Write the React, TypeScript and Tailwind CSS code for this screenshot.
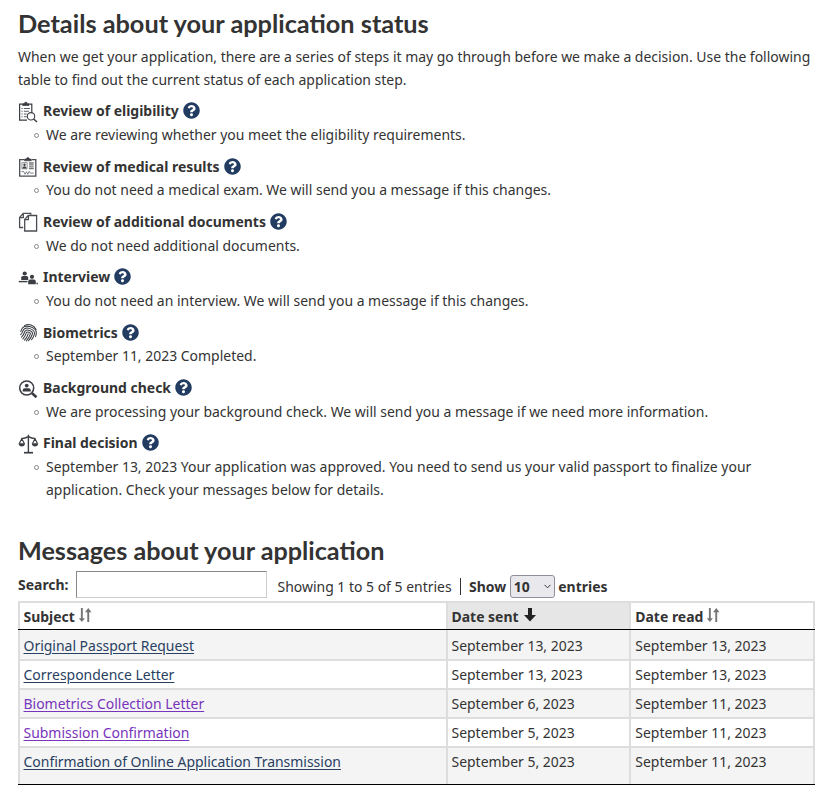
import React from 'react';
import { FaQuestionCircle } from 'react-icons/fa';

const S = '#3a3d42';

const Eligibility = () => (
  <svg width="20" height="22" viewBox="0 0 20 22" fill="none" stroke={S} strokeWidth="1.2">
    <path d="M9 19.200H1.600V3.200h3M11.200 3.200h2.600v8.200" />
    <path d="M4.600 4.400V2.700h1.700a1.500 1.500 0 0 1 3 0H11v1.700z" fill={S} strokeWidth=".8" />
    <path d="M3.400 7.500h1.200M5.900 7.500h6M3.400 10.200h1.200M5.900 10.200h5M3.400 13h1.200M5.900 13h2.800M3.400 15.800h1.200M5.900 15.800h2.800" strokeWidth="1.100" stroke="#5c5f64" />
    <circle cx="13" cy="15.300" r="3.700" strokeWidth="1.100" />
    <path d="M15.700 18l3.300 3" strokeWidth="1.500" />
  </svg>
);

const Medical = () => (
  <svg width="20" height="20" viewBox="0 0 20 20" fill="none" stroke={S} strokeWidth="1.3">
    <path d="M6 2.600H1.700v16.600h16.100V2.600H14" stroke="#4a4d52" />
    <path d="M6.500 3.800V2.100h1.900a1.500 1.500 0 0 1 3 0h1.900v1.700z" fill={S} strokeWidth=".6" />
    <path d="M3.900 5.600h5.200v6.200H3.900z" strokeWidth=".8" stroke="#777" />
    <circle cx="6.500" cy="7.700" r="1.200" fill={S} stroke="none" />
    <path d="M4.500 11.500c0-3 4-3 4 0z" fill={S} stroke="none" />
    <path d="M11 6h4.700M11 7.900h4.700M11 9.800h4.700M11 11.700h4.700" stroke="#777" />
    <path d="M3.500 14.500h2.200l1.300 2.800 1.500-2.600 1.400 2.600 1.300-3 1.100 1.800h3.400" strokeWidth=".8" stroke="#66696e" />
  </svg>
);

const Documents = () => (
  <svg width="20" height="20" viewBox="0 0 20 20" fill="none" strokeWidth="1.3">
    <path d="M5.200 15.500H1.600V5.500L5.200 1.400h7.600v1.400M1.600 5.700h3.700V1.400" stroke="#4a4d52" />
    <path d="M6.700 7.400l3.600-3.900h8.300v15.500H6.700zM6.700 7.600h3.700V3.500" stroke="#4a4d52" />
  </svg>
);

const Interview = () => (
  <svg width="20" height="20" viewBox="0 0 20 20" fill={S}>
    <circle cx="6.700" cy="5.500" r="2.100" />
    <path d="M3.200 12V9.600Q3.200 8 4.900 8h3.600q1.700 0 1.700 1.600V12z" />
    <path d="M.8 12.900h8.700v1.400H.8z" />
    <circle cx="14" cy="8.800" r="2.100" />
    <path d="M10.200 16.200v-2.700q0-2 1.900-2h3.800q1.900 0 1.900 2v2.700zM18.500 14.800h1.400v1.400h-1.400z" />
  </svg>
);

const Fingerprint = () => (
  <svg width="20" height="20" viewBox="0 0 20 20" fill="none" stroke={S} strokeWidth="1.050" strokeLinecap="round">
    <g transform="rotate(18 10.500 10)">
      <path d="M4.500 4.200Q7 1.600 10.500 1.600t6.200 2.800" />
      <path d="M2.700 11V10q0-6.500 7.800-6.500T18.300 10v1.200" />
      <path d="M3.600 14q.9-1.500.9-4 0-4.600 6-4.600t6 4.600q0 3-1 5.500" />
      <path d="M5.200 16q1.300-2.300 1.300-6 0-2.700 4-2.700t4 2.700q0 4-1.500 7.300" />
      <path d="M7 17.300Q8.400 14 8.400 10.300q0-1.200 2.100-1.200t2.100 1.200q0 4.200-1.700 7.800" />
      <path d="M10.500 10.900q0 3.800-1.600 7.200" />
    </g>
  </svg>
);

const Background = () => (
  <svg width="20" height="20" viewBox="0 0 20 20" fill="none" stroke={S}>
    <circle cx="8.700" cy="9" r="7" strokeWidth="1.500" />
    <path d="M13.800 14l4.700 4.200" strokeWidth="2.600" />
    <circle cx="8.700" cy="6.600" r="1.900" fill={S} stroke="none" />
    <path d="M4.700 12.400v-1.200q0-2 2-2h4q2 0 2 2v1.200z" fill={S} stroke="none" />
  </svg>
);

const Scales = () => (
  <svg width="21" height="20" viewBox="0 0 21 20" fill="none" stroke={S} strokeWidth="1.4">
    <path d="M10.400.8v17.500M3.500 4.600q3.700-.2 6.900-2 3.200 1.800 6.900 2" />
    <path d="M6 18.700h9" strokeWidth="1.700" />
    <path d="M1.300 9.500L3.800 4.800l2.500 4.700M14.500 9.500L17 4.800l2.500 4.700" strokeWidth="1.200" />
    <path d="M.5 9.300h6.600q-.5 3.200-3.300 3.200T.5 9.300zM13.700 9.300h6.600q-.5 3.200-3.300 3.200t-3.300-3.200z" fill={S} stroke="none" />
  </svg>
);

const SortBoth = () => (
  <svg width="14" height="15" viewBox="0 0 14 15" fill="#757575" className="mb-[2px] shrink-0">
    <path d="M2.900 0h1.900v10.200h2.100L3.850 14 .800 10.200h2.100z" />
    <path d="M9.300 14h1.900V4.200h2.300L10.250 0 7 4.200h2.300z" />
  </svg>
);

const SortDown = () => (
  <svg width="12" height="14" viewBox="0 0 12 14" fill="#222" className="mb-[2px] shrink-0">
    <path d="M4 0h4v7h4l-6 6.500L0 7h4z" />
  </svg>
);

const steps = [
  { icon: Eligibility, title: 'Review of eligibility', text: 'We are reviewing whether you meet the eligibility requirements.' },
  { icon: Medical, title: 'Review of medical results', text: 'You do not need a medical exam. We will send you a message if this changes.' },
  { icon: Documents, title: 'Review of additional documents', text: 'We do not need additional documents.' },
  { icon: Interview, title: 'Interview', text: 'You do not need an interview. We will send you a message if this changes.' },
  { icon: Fingerprint, title: 'Biometrics', text: 'September 11, 2023 Completed.' },
  { icon: Background, title: 'Background check', text: 'We are processing your background check. We will send you a message if we need more information.' },
  { icon: Scales, title: 'Final decision', text: 'September 13, 2023 Your application was approved. You need to send us your valid passport to finalize your application. Check your messages below for details.' },
];

const messages = [
  { subject: 'Original Passport Request', sent: 'September 13, 2023', read: 'September 13, 2023', visited: false },
  { subject: 'Correspondence Letter', sent: 'September 13, 2023', read: 'September 13, 2023', visited: false },
  { subject: 'Biometrics Collection Letter', sent: 'September 6, 2023', read: 'September 11, 2023', visited: true },
  { subject: 'Submission Confirmation', sent: 'September 5, 2023', read: 'September 11, 2023', visited: true },
  { subject: 'Confirmation of Online Application Transmission', sent: 'September 5, 2023', read: 'September 11, 2023', visited: false },
];

const heights = ['h-[29px]', 'h-[29px]', 'h-[29px]', 'h-[29px]', 'h-[38px]'];

export default function App() {
  return (
    <main className="h-[795px] w-[825px] overflow-hidden bg-white pl-[18px] font-['Noto_Sans',sans-serif] text-[13.96px] leading-[23px] text-[#333]">
      <h1 className="h-[45px] pt-[7px] font-[Lato,sans-serif] text-[25.3px] leading-[32px] font-bold whitespace-nowrap">Details about your application status</h1>
      <p className="h-[54px] w-[800px]">
        When we get your application, there are a series of steps it may go through before we make a decision. Use the following table to find out the current status of each application step.
      </p>
      <ul className="h-[437px]">
        {steps.map(({ icon: Icon, title, text }) => (
          <li key={title} className="mb-[8.350px]">
            <div className="flex h-[24px] items-center pb-[0.400px]">
              <span className="flex w-[25px] shrink-0 justify-start pt-[2px]">
                <Icon />
              </span>
              <strong className="font-bold whitespace-nowrap">{title}</strong>
              <FaQuestionCircle className="ml-[4px] size-[17px] shrink-0 text-[#223b60]" />
            </div>
            <div className="flex">
              <span className="mt-[10px] mr-[7px] ml-[16px] size-[5px] shrink-0 rounded-full border border-[#888]" />
              <p className="w-[735px]">{text}</p>
            </div>
          </li>
        ))}
      </ul>
      <h2 className="h-[35px] font-[Lato,sans-serif] text-[25.2px] leading-[28px] font-bold whitespace-nowrap">Messages about your application</h2>
      <div className="flex h-[30px] items-start">
        <label className="mt-[2px] w-[58px] font-bold">Search:</label>
        <input aria-label="Search" className="h-[27px] w-[191px] border border-t-[#888] border-r-[#ccc] border-b-[#ccc] border-l-[#888] bg-white" />
        <span className="mt-[4px] ml-[10.500px] whitespace-nowrap">Showing 1 to 5 of 5 entries</span>
        <span className="mt-[7px] ml-[8px] h-[17px] w-px bg-[#333]" />
        <strong className="mt-[4px] ml-[8.500px] font-bold">Show</strong>
        <span className="mt-[4px] ml-[3.500px] flex h-[23px] w-[45px] items-center justify-between rounded-[3px] border border-[#8f8f9d] bg-[#e9e9ed] pr-[3px] pl-[3px] font-bold">
          10
          <svg width="7" height="5" viewBox="0 0 7 5" fill="none" stroke="#333">
            <path d="M.5.8l3 3 3-3" />
          </svg>
        </span>
        <strong className="mt-[4px] ml-[3.500px] font-bold">entries</strong>
      </div>
      <div className="w-[797px] border-b border-black">
        <div className="grid h-[29px] grid-cols-[428px_183px_186px] border-b border-black font-bold">
          <div className="flex items-center gap-[3px] border-t-2 border-l-2 border-[#ddd] pl-[3.500px]">Subject <SortBoth /></div>
          <div className="flex items-center gap-[5px] border-t-2 border-l-2 border-[#ddd] bg-[#e6e6e6] pl-[3.500px]">Date sent <SortDown /></div>
          <div className="flex items-center gap-[3px] border-x-2 border-t-2 border-[#ddd] pl-[4.300px]">Date read <SortBoth /></div>
        </div>
        {messages.map((m, i) => (
          <div
            key={m.subject}
            className={`grid grid-cols-[428px_183px_186px] ${heights[i]} ${i % 2 ? 'bg-white' : 'bg-[#f4f4f4]'}`}
          >
            <div className={`border-l-2 border-[#ddd] pl-[3.500px] ${i === 0 ? 'pt-[4px]' : 'border-t-2 pt-[2px]'}`}>
              <a className={`underline underline-offset-[1.500px] ${m.visited ? 'text-[#7834bc]' : 'text-[#284162]'}`}>{m.subject}</a>
            </div>
            <div className={`border-l-2 border-[#ddd] pl-[3.500px] ${i === 0 ? 'pt-[4px]' : 'border-t-2 pt-[2px]'}`}>{m.sent}</div>
            <div className={`border-x-2 border-[#ddd] pl-[4.300px] ${i === 0 ? 'pt-[4px]' : 'border-t-2 pt-[2px]'}`}>{m.read}</div>
          </div>
        ))}
      </div>
    </main>
  );
}
